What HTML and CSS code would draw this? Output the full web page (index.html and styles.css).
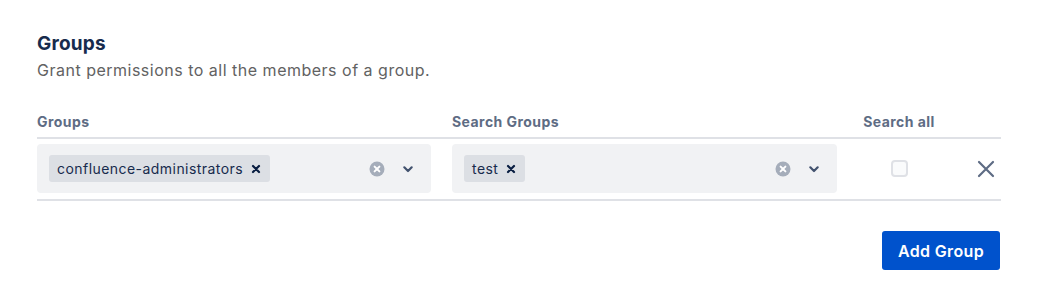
FILE: index.html
```html
<!DOCTYPE html>
<html>
<head>
<meta charset="utf-8">
<link rel="stylesheet" href="styles.css">
</head>
<body>
<div class="page">
  <h2 class="title">Groups</h2>
  <p class="desc">Grant permissions to all the members of a group.</p>

  <div class="table">
    <div class="row head">
      <div class="th">Groups</div>
      <div class="th">Search Groups</div>
      <div class="th center">Search all</div>
      <div class="th"></div>
    </div>

    <div class="row body">
      <div class="td">
        <div class="select">
          <div class="values">
            <span class="tag">confluence-administrators
              <svg class="tag-x" viewBox="0 0 10 10" width="10" height="10"><path d="M2 2L8 8M8 2L2 8" stroke="#091E42" stroke-width="2.2" stroke-linecap="round"/></svg>
            </span>
          </div>
          <div class="indicators">
            <svg class="clear" viewBox="0 0 16 16" width="16" height="16"><circle cx="8" cy="8" r="7.5" fill="#A5ADBA"/><path d="M5.6 5.6L10.4 10.4M10.4 5.6L5.6 10.4" stroke="#fff" stroke-width="2" stroke-linecap="round"/></svg>
            <svg class="chev" viewBox="0 0 24 24" width="24" height="24"><path d="M8.3 10.3L12 14l3.7-3.7" fill="none" stroke="#42526E" stroke-width="2.2" stroke-linecap="round" stroke-linejoin="round"/></svg>
          </div>
        </div>
      </div>
      <div class="td">
        <div class="select">
          <div class="values">
            <span class="tag">test
              <svg class="tag-x" viewBox="0 0 10 10" width="10" height="10"><path d="M2 2L8 8M8 2L2 8" stroke="#091E42" stroke-width="2.2" stroke-linecap="round"/></svg>
            </span>
          </div>
          <div class="indicators">
            <svg class="clear" viewBox="0 0 16 16" width="16" height="16"><circle cx="8" cy="8" r="7.5" fill="#A5ADBA"/><path d="M5.6 5.6L10.4 10.4M10.4 5.6L5.6 10.4" stroke="#fff" stroke-width="2" stroke-linecap="round"/></svg>
            <svg class="chev" viewBox="0 0 24 24" width="24" height="24"><path d="M8.3 10.3L12 14l3.7-3.7" fill="none" stroke="#42526E" stroke-width="2.2" stroke-linecap="round" stroke-linejoin="round"/></svg>
          </div>
        </div>
      </div>
      <div class="td center"><span class="checkbox"></span></div>
      <div class="td end">
        <svg class="remove" viewBox="0 0 18 18" width="18" height="18"><path d="M2 2L16 16M16 2L2 16" stroke="#5E6C84" stroke-width="2.2" stroke-linecap="round"/></svg>
      </div>
    </div>
  </div>

  <div class="actions">
    <button class="btn">Add Group</button>
  </div>
</div>
</body>
</html>
```
FILE: styles.css
```css
* { box-sizing: border-box; }
body {
  margin: 0;
  background: #fff;
  font-family: Inter, "Noto Sans", "Liberation Sans", sans-serif;
  color: #172B4D;
  letter-spacing: 0.45px;
}
.page {
  padding: 32px 61px 0 37px;
}
.title {
  margin: 0;
  font-size: 19px;
  line-height: 24px;
  font-weight: 700;
  color: #172B4D;
  letter-spacing: 0.2px;
}
.desc {
  margin: 2px 0 0;
  font-size: 16px;
  line-height: 24px;
  color: #626262;
  letter-spacing: 0.5px;
}
.table {
  margin-top: 30px;
}
.row {
  display: grid;
  grid-template-columns: 394px 385px 82px 1fr;
  column-gap: 21px;
  border-bottom: 2px solid #DFE1E6;
}
.th {
  font-size: 14px;
  line-height: 20px;
  font-weight: 700;
  color: #5E6C84;
  padding-bottom: 5px;
}
.td {
  padding: 5px 0 6px;
  display: flex;
  align-items: center;
}
.center { text-align: center; justify-content: center; }
.end { justify-content: flex-end; padding-right: 6px; }
.select {
  flex: 1;
  height: 49px;
  background: #F1F2F4;
  border-radius: 4px;
  display: flex;
  align-items: center;
  padding: 0 11px 0 12px;
}
.values { flex: 1; display: flex; }
.tag {
  display: inline-flex;
  align-items: center;
  height: 27px;
  padding: 0 9px 0 8px;
  background: #DCDFE4;
  border-radius: 3px;
  font-size: 14px;
  color: #172B4D;
  gap: 8px;
}
.tag-x { display: block; }
.indicators {
  display: flex;
  align-items: center;
  gap: 7px;
}
.clear { margin: 0 4px; display: block; }
.chev { display: block; }
.checkbox {
  width: 17px;
  height: 17px;
  border: 2px solid #DFE1E6;
  border-radius: 4px;
  background: #FAFBFC;
}
.remove { display: block; }
.actions {
  display: flex;
  justify-content: flex-end;
  margin-top: 30px;
  padding-right: 1px;
}
.btn {
  font-family: inherit;
  letter-spacing: 0.35px;
  height: 39px;
  padding: 0 16px;
  border: none;
  border-radius: 3px;
  background: #0052CC;
  color: #fff;
  font-size: 16px;
  font-weight: 600;
}
```
